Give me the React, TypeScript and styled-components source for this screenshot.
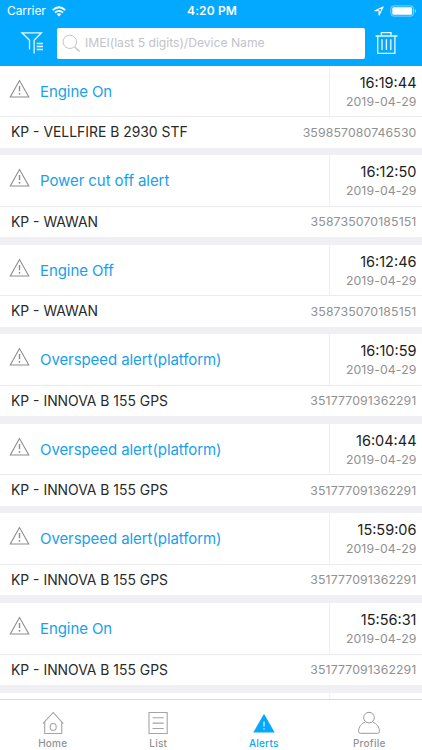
import React from "react";
import styled, { createGlobalStyle } from "styled-components";

const blue = "#03a9ff";

const GlobalStyle = createGlobalStyle`
  * { box-sizing: border-box; }
  body { margin: 0; background: #efeff4; font-family: Inter, "Liberation Sans", sans-serif; }
`;

const Screen = styled.div`
  width: 422px;
  height: 750px;
  display: flex;
  flex-direction: column;
  overflow: hidden;
`;

const Header = styled.header`
  flex: 0 0 65.5px;
  background: ${blue};
  color: #fff;
`;

const StatusBar = styled.div`
  height: 22px;
  padding: 0 5px 0 7px;
  display: grid;
  grid-template-columns: 1fr auto 1fr;
  align-items: center;
  font-size: 12px;
  line-height: 22px;
`;

const StatusSide = styled.div<{ $end?: boolean }>`
  display: flex;
  align-items: center;
  justify-content: ${(p) => (p.$end ? "flex-end" : "flex-start")};
  gap: 6px;
  letter-spacing: -0.08px;
`;

const Clock = styled.div`
  font-weight: 600;
  letter-spacing: 0.12px;
`;

const SearchRow = styled.div`
  display: flex;
  padding-top: 6px;
`;

const IconButton = styled.div<{ $width: number }>`
  width: ${(p) => p.$width}px;
  height: 30px;
  flex: none;
  svg { display: block; }
`;

const SearchField = styled.div`
  width: 307.5px;
  height: 30.5px;
  background: #fff;
  border-radius: 2px;
  display: flex;
  align-items: center;
  padding-left: 5px;
  gap: 4px;
  color: #c3c3c8;
  font-size: 12.2px;
  white-space: nowrap;
`;

const Placeholder = styled.span`
  letter-spacing: -0.03px;
  padding-bottom: 1px;
`;

const Feed = styled.main`
  flex: 1;
  min-height: 0;
  overflow: hidden;
  background: #efeff4;
`;

const Card = styled.article`
  height: 82px;
  margin-bottom: 7.6px;
  background: #fff;
`;

const Summary = styled.div`
  height: 51.5px;
  display: flex;
  border-bottom: 1px solid #ebebee;
`;

const AlertType = styled.div`
  width: 330px;
  padding: 0 0 0 9px;
  border-right: 1px solid #f0f0f2;
  display: flex;
  gap: 10px;
  svg { flex: none; margin-top: 12px; }
`;

const AlertName = styled.span`
  color: #189feb;
  font-size: 15px;
  line-height: 52.6px;
  letter-spacing: -0.08px;
`;

const Stamp = styled.div`
  flex: 1;
  padding: 8px 5.5px 0 0;
  text-align: right;
`;

const Time = styled.div`
  color: #222;
  font-size: 14.5px;
  line-height: 18px;
`;

const DateText = styled.div`
  color: #919191;
  font-size: 12.3px;
  line-height: 20px;
  letter-spacing: 0.1px;
`;

const Device = styled.div`
  height: 30px;
  padding: 0 5.5px 0 11px;
  display: flex;
  justify-content: space-between;
  align-items: center;
`;

const DeviceName = styled.span`
  color: #292929;
  font-size: 13.9px;
`;

const Imei = styled.span`
  color: #919191;
  font-size: 12.3px;
  letter-spacing: 0.12px;
`;

const TabBar = styled.nav`
  flex: 0 0 51px;
  display: grid;
  grid-template-columns: repeat(4, 1fr);
  background: #fff;
  border-top: 1px solid #d9d9dc;
`;

const Tab = styled.div<{ $active?: boolean }>`
  display: flex;
  flex-direction: column;
  align-items: center;
  padding-top: 10px;
  color: ${(p) => (p.$active ? blue : "#929292")};
  font-size: 10px;
  font-weight: 500;
  line-height: 14px;
  letter-spacing: 0.25px;
  svg { display: block; margin-bottom: 1.5px; }
`;

const Wifi = () => (
  <svg width="14" height="11" viewBox="0 0 14 11" fill="none" stroke="#fff" strokeWidth="1.8">
    <path d="M.7 4.1Q7-1.5 13.3 4.1M2.9 6.6q4.1-3.5 8.2 0" />
    <path d="M4.7 8.1q2.3-1.8 4.6 0L7 10.5z" fill="#fff" stroke="none" />
  </svg>
);

const LocationArrow = () => (
  <svg width="10" height="10" viewBox="0 0 10 10" fill="none" stroke="#fff" strokeWidth="1.1" strokeLinejoin="round">
    <path d="M9.1.9.9 4.8h4.2v4.3z" />
  </svg>
);

const Battery = () => (
  <svg width="27" height="12" viewBox="0 0 27 12">
    <rect x=".9" y=".9" width="22.6" height="10.2" rx="2.6" fill="none" stroke="#fff" strokeOpacity=".5" />
    <rect x="2.3" y="2.3" width="19.8" height="7.4" rx="1.3" fill="#fff" />
    <path d="M24.8 4v4q1.4-.7 1.4-2T24.8 4" fill="#fff" fillOpacity=".5" />
  </svg>
);

const Filter = () => (
  <svg width="57" height="30" fill="none" stroke="#e9f8ff" strokeWidth="1.3">
    <path d="M29.5 21.6v-9.3L22 4.8h19.4l-7.3 7.5v13.3" />
    <path d="M36.7 15.5h6.2M36.7 18.5h6.2M36.7 21.5h6.2" />
  </svg>
);

const Magnifier = () => (
  <svg width="19" height="20" fill="none" stroke="#c4c4c4" strokeWidth="1">
    <circle cx="7.8" cy="8.8" r="6.7" />
    <path d="m12.7 13.7 4.8 4.7" strokeWidth="1.4" />
  </svg>
);

const Trash = () => (
  <svg width="50" height="30" fill="none" stroke="#e9f8ff" strokeWidth="1.3">
    <path d="M10.6 8h21.9M16.4 8V4.6H26V8M12.7 8v17.4h17.2V8" />
    <path d="M17 11.3V22M21.4 11.3V22M25.8 11.3V22" />
  </svg>
);

const Warning = () => (
  <svg width="21" height="22" fill="none" stroke="#8e8e8e" strokeWidth="1.1">
    <path d="M10.5 2.6 1.3 19h18.5z" />
    <path d="M10.5 8v5.2M10.5 14.9v1.8" strokeWidth="1.4" />
  </svg>
);

const HomeIcon = () => (
  <svg width="22" height="24" fill="none" stroke="#a5a5a5" strokeWidth="1.1">
    <path d="M.9 13.6 11.2 2.5l10.1 11.1M2.7 12v11.5h17V12" />
    <ellipse cx="11.2" cy="16.9" rx="3" ry="3.4" />
  </svg>
);

const ListIcon = () => (
  <svg width="22" height="24" fill="none" stroke="#a5a5a5" strokeWidth="1.1">
    <path d="M2 2.5h18.2v21H2zM5.6 7.7h11.2M5.6 13.1h11.2M5.6 18.5h11.2" />
  </svg>
);

const AlertsIcon = () => (
  <svg width="22" height="24" fill={blue}>
    <path d="M11 3.8 21.7 22.6H.3z" />
    <path d="M11 11.4v5M11 18.2v1.4" stroke="#fff" strokeWidth="1.1" />
  </svg>
);

const ProfileIcon = () => (
  <svg width="24" height="24" fill="none" stroke="#9a9a9a" strokeWidth="1">
    <circle cx="12" cy="7.6" r="5.3" />
    <path d="M8.5 11.9C4 13.7 1.6 17 1.6 21.4q0 1.9 1.8 1.9h17.2q1.8 0 1.8-1.9c0-4.4-2.4-7.7-6.9-9.5" />
  </svg>
);

const alerts = [
  { type: "Engine On", time: "16:19:44", device: "KP - VELLFIRE B 2930 STF", imei: "359857080746530" },
  { type: "Power cut off alert", time: "16:12:50", device: "KP - WAWAN", imei: "358735070185151" },
  { type: "Engine Off", time: "16:12:46", device: "KP - WAWAN", imei: "358735070185151" },
  { type: "Overspeed alert(platform)", time: "16:10:59", device: "KP - INNOVA B 155 GPS", imei: "351777091362291" },
  { type: "Overspeed alert(platform)", time: "16:04:44", device: "KP - INNOVA B 155 GPS", imei: "351777091362291" },
  { type: "Overspeed alert(platform)", time: "15:59:06", device: "KP - INNOVA B 155 GPS", imei: "351777091362291" },
  { type: "Engine On", time: "15:56:31", device: "KP - INNOVA B 155 GPS", imei: "351777091362291" },
];

export default function App() {
  return (
    <Screen>
      <GlobalStyle />
      <Header>
        <StatusBar>
          <StatusSide>Carrier<Wifi /></StatusSide>
          <Clock>4:20 PM</Clock>
          <StatusSide $end><LocationArrow /><Battery /></StatusSide>
        </StatusBar>
        <SearchRow>
          <IconButton $width={57}><Filter /></IconButton>
          <SearchField>
            <Magnifier />
            <Placeholder>IMEI(last 5 digits)/Device Name</Placeholder>
          </SearchField>
          <IconButton $width={50}><Trash /></IconButton>
        </SearchRow>
      </Header>
      <Feed>
        {alerts.map((a) => (
          <Card key={a.time}>
            <Summary>
              <AlertType><Warning /><AlertName>{a.type}</AlertName></AlertType>
              <Stamp>
                <Time>{a.time}</Time>
                <DateText>2019-04-29</DateText>
              </Stamp>
            </Summary>
            <Device>
              <DeviceName>{a.device}</DeviceName>
              <Imei>{a.imei}</Imei>
            </Device>
          </Card>
        ))}
        <Card>
          <Summary><AlertType /></Summary>
        </Card>
      </Feed>
      <TabBar>
        <Tab><HomeIcon />Home</Tab>
        <Tab><ListIcon />List</Tab>
        <Tab $active><AlertsIcon />Alerts</Tab>
        <Tab><ProfileIcon />Profile</Tab>
      </TabBar>
    </Screen>
  );
}
